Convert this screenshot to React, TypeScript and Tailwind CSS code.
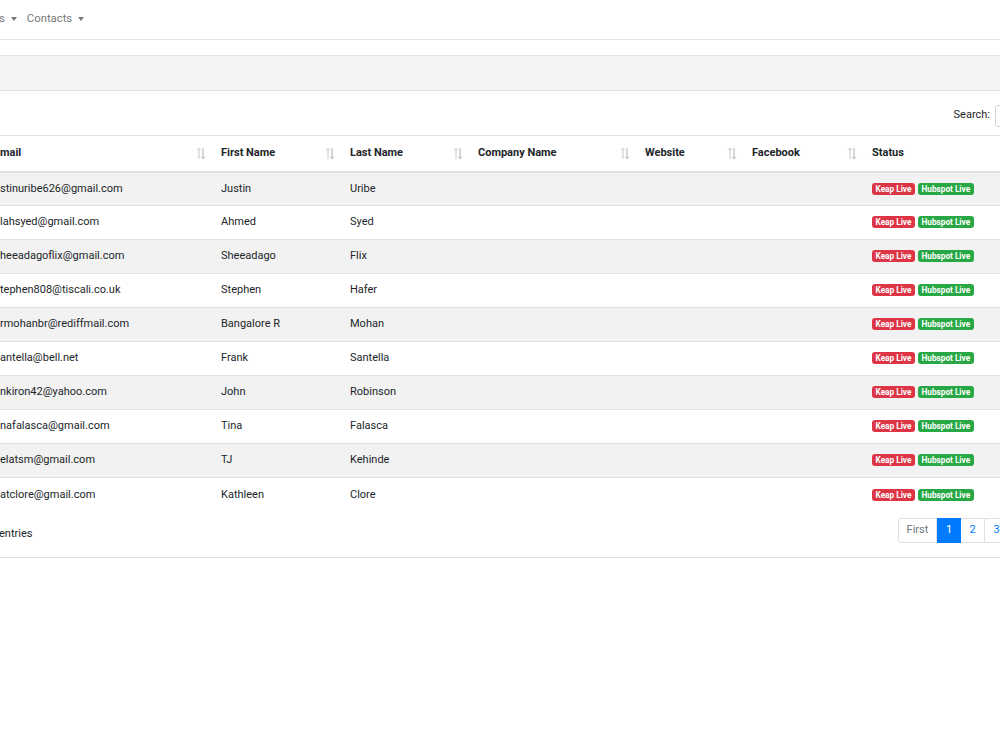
import React from "react";

const rows = [
  ["stinuribe626@gmail.com", "Justin", "Uribe"],
  ["lahsyed@gmail.com", "Ahmed", "Syed"],
  ["heeadagoflix@gmail.com", "Sheeadago", "Flix"],
  ["tephen808@tiscali.co.uk", "Stephen", "Hafer"],
  ["rmohanbr@rediffmail.com", "Bangalore R", "Mohan"],
  ["antella@bell.net", "Frank", "Santella"],
  ["nkiron42@yahoo.com", "John", "Robinson"],
  ["nafalasca@gmail.com", "Tina", "Falasca"],
  ["elatsm@gmail.com", "TJ", "Kehinde"],
  ["atclore@gmail.com", "Kathleen", "Clore"],
];

function SortIcon() {
  return (
    <svg width="10" height="13" viewBox="0 0 10 13" className="absolute right-[3px] top-[11px]">
      <path d="M3 12V1.5M1.2 3.3L3 1.3L4.8 3.3" stroke="#c8c8c8" strokeWidth="1" fill="none" />
      <path d="M7 1v10.5M5.2 9.7L7 11.7L8.8 9.7" stroke="#b0b0b0" strokeWidth="1" fill="none" />
    </svg>
  );
}

function Caret() {
  return <span className="inline-block ml-[6px] align-middle border-x-[3.5px] border-x-transparent border-t-[4px] border-t-[#777]" />;
}

const headers = ["mail", "First Name", "Last Name", "Company Name", "Website", "Facebook", "Status"];

export default function App() {
  return (
    <div className="w-[1000px] h-[750px] bg-white overflow-hidden text-[#212529]" style={{ fontFamily: "Roboto, 'Liberation Sans', sans-serif" }}>
      <nav className="h-[40px] border-b border-[#e4e4e4] flex items-center text-[11.3px] text-[#777] pb-[1px]">
        <span className="-ml-[1px]">s<Caret /></span>
        <span className="ml-[10px]">Contacts<Caret /></span>
      </nav>
      <div className="h-[15px]" />
      <div className="h-[36px] bg-[#f4f4f4] border-y border-[#e2e2e2]" />
      <div className="h-[44px] flex items-center justify-end text-[11px] pt-[5px] overflow-hidden">
        <span className="mr-[5px]">Search:</span>
        <div className="shrink-0 w-[150px] -mr-[145px] h-[22px] border border-[#ced4da] rounded-[3px] bg-white" />
      </div>
      <div className="overflow-hidden">
        <table className="table-fixed border-collapse w-[1100px] text-[11px]">
          <colgroup>
            <col className="w-[209px]" />
            <col className="w-[129px]" />
            <col className="w-[128px]" />
            <col className="w-[167px]" />
            <col className="w-[107px]" />
            <col className="w-[120px]" />
            <col className="w-[240px]" />
          </colgroup>
          <thead>
            <tr className="h-[36px] border-t border-[#dee2e6] border-b-2 border-b-[#dee2e6]">
              {headers.map((h, i) => (
                <th key={h} className={`relative text-left font-bold align-middle ${i === 0 ? "pl-0" : "pl-[12px]"}`}>
                  {h}
                  {i < 6 && <SortIcon />}
                </th>
              ))}
            </tr>
          </thead>
          <tbody>
            {rows.map((r, idx) => (
              <tr key={idx} className={`h-[34px] border-t border-[#dee2e6] ${idx % 2 === 0 ? "bg-[#f2f2f2]" : "bg-white"}`}>
                <td className="pl-0 whitespace-nowrap overflow-hidden">{r[0]}</td>
                <td className="pl-[12px]">{r[1]}</td>
                <td className="pl-[12px]">{r[2]}</td>
                <td />
                <td />
                <td />
                <td className="pl-[12px]">
                  <span className="inline-block align-middle bg-[#dc3545] text-white text-[8.25px] font-bold leading-[12px] px-[3.5px] rounded-[3px]">Keap Live</span>
                  <span className="inline-block align-middle ml-[3px] bg-[#28a745] text-white text-[8.25px] font-bold leading-[12px] px-[3.5px] rounded-[3px]">Hubspot Live</span>
                </td>
              </tr>
            ))}
          </tbody>
        </table>
      </div>
      <div className="h-[46px] border-b border-[#dee2e6] flex items-start justify-between text-[11px] pt-[6px]">
        <span className="-ml-[1px] mt-[8px]">entries</span>
        <div className="flex h-[25px] text-[11px]">
          <span className="w-[39px] flex items-center justify-center border border-[#dee2e6] rounded-l-[3px] text-[#6c757d]">First</span>
          <span className="w-[24px] flex items-center justify-center bg-[#007bff] text-white border border-[#007bff]">1</span>
          <span className="w-[24px] flex items-center justify-center border border-[#dee2e6] border-l-0 text-[#007bff]">2</span>
          <span className="w-[24px] flex items-center justify-center border border-[#dee2e6] border-l-0 text-[#007bff] -mr-[9px]">3</span>
        </div>
      </div>
    </div>
  );
}
